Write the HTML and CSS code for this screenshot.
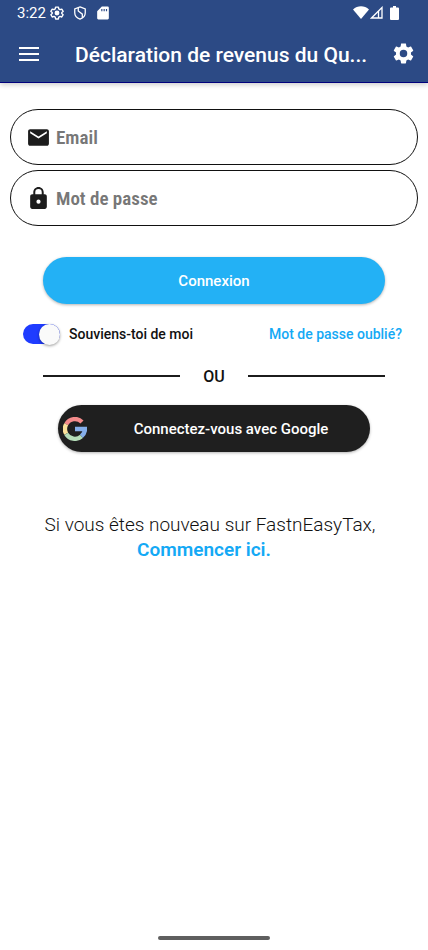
FILE: index.html
```html
<!DOCTYPE html>
<html lang="fr">
<head>
<meta charset="utf-8">
<meta name="viewport" content="width=device-width, initial-scale=1">
<title>Déclaration de revenus</title>
<link rel="stylesheet" href="styles.css">
</head>
<body>
<header class="header">
  <div class="status">
    <span class="clock">3:22</span>
    <svg class="status-icon" viewBox="0 0 24 24" fill="none" stroke="#fff" stroke-width="2.4" stroke-linejoin="round"><path d="M9.6 2h4.8l.6 3 2.2 1.3 3-1 2.3 4-2.3 2v1.6l2.3 2-2.3 4-3-1L15 19.200l-.6 3H9.600l-.6-3-2.200-1.300-3 1-2.300-4 2.300-2v-1.600l-2.300-2 2.300-4 3 1L9 5z"/><circle cx="12" cy="12" r="3" fill="#fff"/></svg>
    <svg class="status-icon shield" viewBox="0 0 24 24" fill="none" stroke="#fff" stroke-width="2.200"><path d="M12 1.500 21 5v6.500c0 5-3.500 9-9 11-5.500-2-9-6-9-11V5z"/><path d="M9 3v5.500l7 5.500v6"/></svg>
    <svg class="status-icon" viewBox="0 0 24 24" fill="#fff"><path fill-rule="evenodd" d="M10 1h10a2 2 0 0 1 2 2v18a2 2 0 0 1-2 2H4a2 2 0 0 1-2-2V9zM9 5v4h2V5zm4 0v4h2V5zm4 0v4h2V5z"/></svg>
    <span class="status-end">
      <svg width="16" height="13" viewBox="0 0 16 13" fill="#fff"><path d="M0 3.500C4.500-.8 11.500-.8 16 3.500L8 13z"/></svg>
      <svg width="13" height="13" viewBox="0 0 13 13" fill="none" stroke="#fff" stroke-width="1.300"><path d="M12 1.500V12H1.500z"/><path d="M8.500 5v7"/></svg>
      <svg class="battery" width="9" height="14" viewBox="0 0 9 14" fill="#fff"><path d="M3 0h3v1.500h2a1 1 0 0 1 1 1V13a1 1 0 0 1-1 1H1a1 1 0 0 1-1-1V2.500a1 1 0 0 1 1-1h2z"/></svg>
    </span>
  </div>
  <div class="toolbar">
    <button class="icon-button" type="button" aria-label="Menu"><svg width="20" height="14" viewBox="0 0 20 14" fill="#fff"><path d="M0 0h20v2H0zM0 6h20v2H0zM0 12h20v2H0z"/></svg></button>
    <h1 class="title">Déclaration de revenus du Qu...</h1>
    <button class="icon-button" type="button" aria-label="Paramètres"><svg width="25" height="25" viewBox="0 0 24 24" fill="#fff"><path d="M19.140 12.940c.04-.3.06-.61.06-.94 0-.32-.02-.64-.07-.94l2.030-1.580c.18-.14.23-.41.12-.61l-1.920-3.320c-.12-.22-.37-.29-.59-.22l-2.390.96c-.5-.38-1.030-.7-1.620-.94l-.36-2.540c-.04-.24-.24-.41-.48-.41h-3.840c-.24 0-.43.17-.47.41l-.36 2.540c-.59.24-1.130.57-1.620.94l-2.390-.96c-.22-.08-.47 0-.59.22L2.740 8.870c-.12.21-.08.47.12.61l2.030 1.580c-.05.3-.09.63-.09.94s.02.64.07.94l-2.030 1.580c-.18.14-.23.41-.12.61l1.920 3.320c.12.22.37.29.59.22l2.390-.96c.5.38 1.030.7 1.620.94l.36 2.540c.05.24.24.41.48.41h3.840c.24 0 .44-.17.47-.41l.36-2.540c.59-.24 1.130-.56 1.620-.94l2.390.96c.22.08.47 0 .59-.22l1.920-3.320c.12-.22.07-.47-.12-.61zM12 15.600A3.600 3.600 0 1 1 12 8.400a3.600 3.600 0 0 1 0 7.200z"/></svg></button>
  </div>
</header>
<main class="main">
  <form class="form">
    <label class="field">
      <svg width="25" height="25" viewBox="0 0 24 24" fill="#1c1c1c"><path d="M20 4H4c-1.100 0-2 .9-2 2v12c0 1.100.9 2 2 2h16c1.100 0 2-.9 2-2V6c0-1.100-.9-2-2-2zm0 4-8 5-8-5V6l8 5 8-5z"/></svg>
      <input type="email" placeholder="Email" aria-label="Email">
    </label>
    <label class="field">
      <svg width="25" height="25" viewBox="0 0 24 24" fill="#1c1c1c"><path d="M18 8h-1V6c0-2.760-2.240-5-5-5S7 3.240 7 6v2H6c-1.100 0-2 .9-2 2v10c0 1.100.9 2 2 2h12c1.100 0 2-.9 2-2V10c0-1.100-.9-2-2-2zm-6 9a2 2 0 1 1 0-4 2 2 0 0 1 0 4zm3.100-9H8.900V6a3.100 3.100 0 0 1 6.200 0z"/></svg>
      <input type="password" placeholder="Mot de passe" aria-label="Mot de passe">
    </label>
    <button class="login" type="button">Connexion</button>
    <div class="options">
      <label class="remember"><input class="switch" type="checkbox" role="switch" checked>Souviens-toi de moi</label>
      <a class="link" href="#">Mot de passe oublié?</a>
    </div>
    <div class="divider">OU</div>
    <button class="google" type="button">
      <svg width="24" height="24" viewBox="0 0 24 24" fill="none" stroke-width="4.400"><path stroke="#f48b8b" d="M3.200 7.200A10 10 0 0 1 19 5"/><path stroke="#fbe29a" d="M3.200 16.800a10 10 0 0 1 0-9.600"/><path stroke="#b5ddb9" d="M18.500 19.300A10 10 0 0 1 3.200 16.800"/><path stroke="#85aeea" d="M12 12h10a10 10 0 0 1-3.600 7.300"/></svg>
      <span>Connectez-vous avec Google</span>
    </button>
  </form>
  <p class="signup">Si vous êtes nouveau sur FastnEasyTax,<a href="#">Commencer ici.</a></p>
</main>
<footer class="home"></footer>
</body>
</html>
```
FILE: styles.css
```css
* { box-sizing: border-box; }
body {
  margin: 0;
  min-height: 100vh;
  display: flex;
  flex-direction: column;
  background: #fff;
  color: #111;
  font-family: Roboto, "Liberation Sans", sans-serif;
}
button, input { font: inherit; }
button { border: 0; cursor: pointer; }
svg { display: block; flex: none; }
a { color: #14a9f5; text-decoration: none; font-weight: 500; }

.header {
  background: #2c4a85;
  color: #fff;
  border-bottom: 1px solid #00007c;
  box-shadow: 0 2px 5px rgba(0, 0, 0, .2);
}
.status {
  height: 25px;
  padding: 0 29px 0 17px;
  display: flex;
  align-items: center;
}
.clock { font-size: 15px; margin-right: 4px; }
.status-icon { width: 14px; height: 14px; margin-right: 9px; }
.status-end { margin-left: auto; display: flex; align-items: center; gap: 1px; }
.battery { margin-left: 6px; }
.toolbar {
  height: 57px;
  padding: 0 12px 0 16px;
  display: flex;
  align-items: center;
}
.icon-button {
  width: 26px;
  height: 40px;
  padding: 0;
  display: grid;
  place-items: center;
  background: none;
}
.title {
  flex: 1;
  min-width: 0;
  margin: 3px 0 0 33px;
  font-size: 21px;
  line-height: 28px;
  font-weight: 500;
  white-space: nowrap;
}

.main { flex: 1; padding: 26px 10px 0; }
.form { display: flex; flex-direction: column; }
.field {
  height: 56px;
  margin-bottom: 5px;
  padding: 0 15px;
  display: flex;
  align-items: center;
  gap: 5px;
  border: 1px solid #111;
  border-radius: 28px;
}
.field input {
  flex: 1;
  min-width: 0;
  height: 40px;
  padding: 0;
  border: 0;
  outline: 0;
  background: none;
  font-family: "Roboto Condensed", Roboto, sans-serif;
  font-size: 19px;
  font-weight: 600;
}
.field input::placeholder { color: #777; opacity: 1; }
.login, .google {
  height: 47px;
  border-radius: 24px;
  color: #fff;
  font-size: 15px;
  font-weight: 500;
  box-shadow: 0 1px 3px rgba(0, 0, 0, .3);
}
.login { margin: 26px 33px 0; background: #23b1f5; }
.options {
  height: 24px;
  margin: 18px 16px 0 13px;
  display: flex;
  align-items: center;
  justify-content: space-between;
  font-size: 14px;
}
.remember { display: flex; align-items: center; gap: 9px; font-weight: 500; }
.switch {
  appearance: none;
  width: 37px;
  height: 20px;
  margin: 0;
  display: flex;
  align-items: center;
  justify-content: flex-end;
  border-radius: 10px;
  background: #1f3cff;
}
.switch::before {
  content: "";
  width: 21px;
  height: 21px;
  border-radius: 50%;
  background: #fafafa;
  box-shadow: 0 1px 3px rgba(0, 0, 0, .4);
}
.switch:not(:checked) { justify-content: flex-start; background: #bbb; }
.divider {
  height: 24px;
  margin: 18px 33px 17px;
  display: flex;
  align-items: center;
  gap: 23px;
  font-size: 16px;
  font-weight: 500;
}
.divider::before, .divider::after {
  content: "";
  flex: 1;
  height: 2px;
  background: #1c1c1c;
}
.google {
  margin: 0 48px;
  padding: 0 5px;
  display: flex;
  align-items: center;
  background: #1f1f1f;
}
.google span { flex: 1; padding-left: 10px; }
.signup {
  margin: 60px 8px 0 0;
  text-align: center;
  font-size: 19px;
  font-weight: 350;
  line-height: 25px;
}
.signup a { display: block; margin-right: 12px; font-weight: 600; }
.home {
  width: 112px;
  height: 4px;
  margin: 0 auto 10px;
  border-radius: 2px;
  background: #5f5f5f;
}
```
